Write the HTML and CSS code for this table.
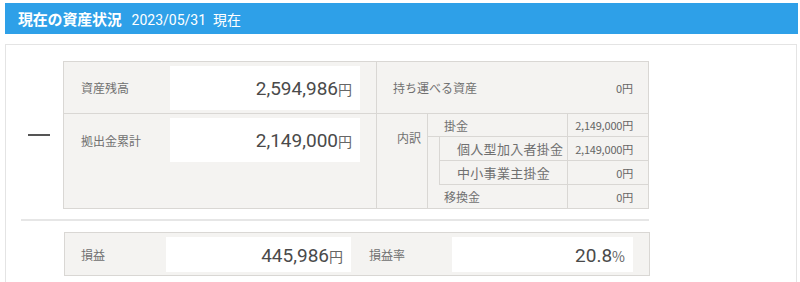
FILE: index.html
```html
<!DOCTYPE html>
<html lang="ja">
<head>
  <meta charset="utf-8">
  <title>現在の資産状況</title>
  <link rel="stylesheet" href="styles.css">
</head>
<body>
  <div class="head">
    <h2>現在の資産状況</h2>
    <span class="head-date">2023/05/31&nbsp;&nbsp;現在</span>
  </div>

  <div class="panel">
    <div class="summary">
      <div class="minus"></div>

      <div class="grid">
        <!-- row 1 -->
        <div class="cell left">
          <span class="label">資産残高</span>
          <div class="value">2,594,986<small>円</small></div>
        </div>
        <div class="cell right">
          <span class="label">持ち運べる資産</span>
          <span class="amount">0円</span>
        </div>

        <!-- row 2 -->
        <div class="cell left top">
          <span class="label">拠出金累計</span>
          <div class="value">2,149,000<small>円</small></div>
        </div>
        <div class="cell right split">
          <div class="split-head">内訳</div>
          <div class="detail">
            <div class="line">
              <span class="name">掛金</span>
              <span class="num">2,149,000円</span>
            </div>
            <div class="sub">
              <div class="line">
                <span class="name">個人型加入者掛金</span>
                <span class="num">2,149,000円</span>
              </div>
              <div class="line plain">
                <span class="name">中小事業主掛金</span>
                <span class="num">0円</span>
              </div>
            </div>
            <div class="line">
              <span class="name">移換金</span>
              <span class="num">0円</span>
            </div>
          </div>
        </div>
      </div>
    </div>

    <div class="rule"></div>

    <div class="profit">
      <span class="label">損益</span>
      <div class="value wide">445,986<small>円</small></div>
      <span class="label rate">損益率</span>
      <div class="value">20.8<small>%</small></div>
    </div>
  </div>
</body>
</html>
```

FILE: styles.css
```css
body {
  margin: 0;
  background: #fff;
  font-family: "Noto Sans CJK JP", "Noto Sans", sans-serif;
  color: #666;
}

.head {
  display: flex;
  align-items: center;
  height: 31px;
  margin: 3px 2px 0 5px;
  padding-left: 13px;
  background: #2ea0e8;
  color: #fff;
}

.head h2 {
  margin: 0;
  font-size: 15px;
  font-weight: bold;
  letter-spacing: -0.2px;
}

.head-date {
  margin-left: 10px;
  font-family: Roboto, "Noto Sans CJK JP", sans-serif;
  font-size: 14px;
}

.panel {
  margin: 10px 3px 0 5px;
  padding: 16px 0 10px 15px;
  border: 1px solid #e4e4e4;
  border-bottom: none;
  height: 300px;
}

.summary {
  display: flex;
  align-items: center;
}

.minus {
  width: 22px;
  height: 2px;
  margin: 0 13px 0 7px;
  background: #555;
}

.grid {
  display: grid;
  grid-template-columns: 313px 271px;
  grid-template-rows: 52px 94px;
  width: 584px;
  border: 1px solid #d9d7d4;
  background: #f4f3f1;
}

.cell {
  display: flex;
  align-items: center;
  border-bottom: 1px solid #d9d7d4;
}

.cell:nth-last-child(-n+2) {
  border-bottom: none;
}

.cell.left {
  padding: 0 16px 0 17px;
  border-right: 1px solid #d9d7d4;
}

.cell.top {
  align-items: flex-start;
  padding-top: 4px;
}

.cell.top .label {
  margin-top: 14px;
}

.label {
  flex: 1;
  font-size: 12px;
  color: #707070;
}

.value {
  width: 182px;
  height: 44px;
  padding-right: 8px;
  background: #fff;
  text-align: right;
  line-height: 46px;
  font-family: Roboto, "Liberation Sans", sans-serif;
  font-size: 19px;
  color: #4a4a4a;
}

.value small {
  font-family: "Noto Sans CJK JP", sans-serif;
  font-size: 14px;
  color: #666;
}

.cell.right {
  padding: 0 15px 0 16px;
}

.amount {
  font-size: 11px;
}

.cell.split {
  align-items: stretch;
  padding: 0;
}

.split-head {
  width: 51px;
  padding: 15px 0 0 20px;
  box-sizing: border-box;
  border-right: 1px solid #d9d7d4;
  font-size: 12px;
  color: #707070;
}

.detail {
  flex: 1;
  display: flex;
  flex-direction: column;
}

.line {
  display: flex;
  height: 23px;
  align-items: center;
  border-bottom: 1px solid #d9d7d4;
  font-size: 12px;
}

.line:last-child {
  height: 24px;
  border-bottom: none;
}

.name {
  width: 123px;
  padding-left: 16px;
  align-self: stretch;
  display: flex;
  align-items: center;
  border-right: 1px solid #d9d7d4;
  color: #707070;
}

.num {
  flex: 1;
  padding-right: 15px;
  text-align: right;
  font-size: 11px;
  letter-spacing: -0.2px;
}

.sub {
  margin-left: 11px;
  border-left: 1px solid #d9d7d4;
  border-bottom: 1px solid #d9d7d4;
}

.sub .line {
  height: 23px;
}

.sub .line.plain {
  border-bottom: none;
}

.sub .name {
  width: 110px;
  padding-left: 17px;
  font-size: 13px;
  letter-spacing: 0.3px;
}

.rule {
  width: 628px;
  height: 2px;
  margin: 10px 0 11px;
  background: #e6e6e6;
}

.profit {
  display: flex;
  align-items: center;
  width: 584px;
  height: 42px;
  margin-left: 43px;
  border: 1px solid #d9d7d4;
  background: #f4f3f1;
}

.profit .label {
  flex: none;
  width: 85px;
  padding-left: 16px;
}

.profit .value {
  width: 173px;
  height: 35px;
  line-height: 37px;
}

.profit .value.wide {
  width: 177px;
}

.profit .label.rate {
  width: 83px;
  margin-left: 18px;
  padding-left: 0;
}
```
